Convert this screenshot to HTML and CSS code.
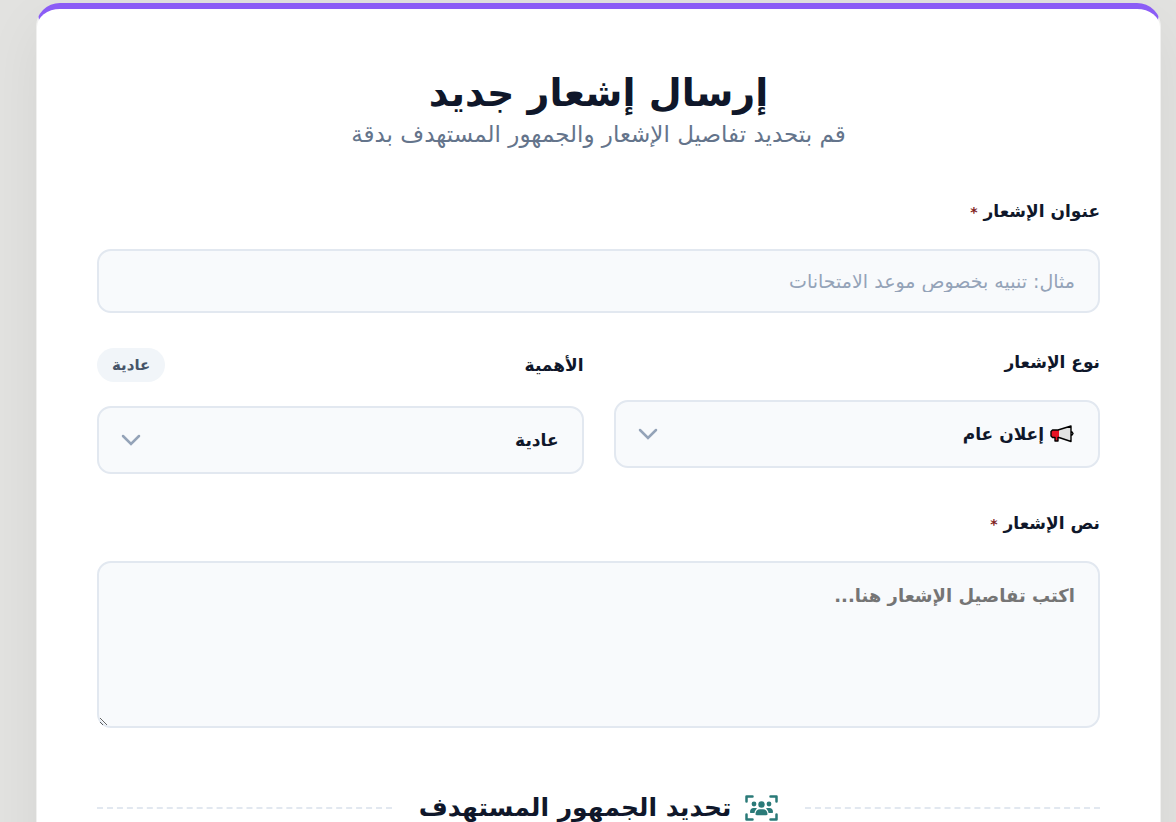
FILE: index.html
```html
<!DOCTYPE html>
<html lang="ar" dir="rtl">

<head>
  <meta charset="utf-8">
  <meta name="viewport" content="width=device-width, initial-scale=1">
  <title>إرسال إشعار جديد</title>
  <link rel="stylesheet" href="styles.css">
</head>

<body>
  <main class="card">
    <header class="card-header">
      <h1>إرسال إشعار جديد</h1>
      <p>قم بتحديد تفاصيل الإشعار والجمهور المستهدف بدقة</p>
    </header>

    <form class="notify-form">
      <div class="form-group">
        <div class="label-row">
          <label for="title">عنوان الإشعار <span class="required">*</span></label>
        </div>
        <input type="text" id="title" class="control" placeholder="مثال: تنبيه بخصوص موعد الامتحانات" required>
      </div>

      <div class="form-row">
        <div class="form-group">
          <div class="label-row">
            <label for="type">نوع الإشعار</label>
          </div>
          <div class="select-wrap">
            <select id="type" class="control has-icon">
              <option>إعلان عام</option>
            </select>
            <svg class="select-icon" viewBox="0 0 24 20" aria-hidden="true">
              <path d="M9 6 21 2v15.500L9 13.500z" fill="#e2e2e2"/>
              <path d="M2.500 6H9v7.500H8V17H5v-3.500H2.500L1 12V7.500z" fill="#e81224"/>
              <path d="M8 6 21 2v15.500L9 13.500M8 6H2.500L1 7.500V12l1.500 1.500H5V17h3v-3.500h1M21.500 7.500l1.500 2-1.500 2" fill="none" stroke="#000" stroke-width="1.400" stroke-linejoin="round"/>
            </svg>
            <svg class="chevron" viewBox="0 0 24 24" aria-hidden="true"><path d="M4 8l8 8 8-8"/></svg>
          </div>
        </div>

        <div class="form-group">
          <div class="label-row">
            <label for="priority">الأهمية</label>
            <span class="badge">عادية</span>
          </div>
          <div class="select-wrap">
            <select id="priority" class="control">
              <option>عادية</option>
            </select>
            <svg class="chevron" viewBox="0 0 24 24" aria-hidden="true"><path d="M4 8l8 8 8-8"/></svg>
          </div>
        </div>
      </div>

      <div class="form-group">
        <div class="label-row">
          <label for="message">نص الإشعار <span class="required">*</span></label>
        </div>
        <textarea id="message" class="control" placeholder="اكتب تفاصيل الإشعار هنا..." required></textarea>
      </div>

      <div class="divider">
        <h2>
          <svg class="users-icon" viewBox="0 0 33 26" aria-hidden="true">
            <path class="frame" d="M1.500 6.500v-5h6M25.500 1.500h6v5M31.500 19.500v5h-6M7.500 24.500h-6v-5"/>
            <circle cx="9" cy="9" r="2.400"/>
            <circle cx="24" cy="9" r="2.400"/>
            <circle cx="16.500" cy="9.500" r="3.200"/>
            <path d="M5 17c0-2.500 1.500-4 3.500-4h2c.8 0 1.200.2 1.700.6-1.500 1-2.500 2.600-2.700 4.400H6c-.6 0-1-.4-1-1zM28 17c0-2.500-1.500-4-3.500-4h-2c-.8 0-1.200.2-1.700.6 1.500 1 2.500 2.600 2.700 4.400H27c.6 0 1-.4 1-1z"/>
            <path d="M10.500 19c0-3 2-4.700 4.500-4.700h3c2.500 0 4.500 1.700 4.500 4.700 0 .8-.5 1.200-1.200 1.200h-9.600c-.7 0-1.200-.4-1.200-1.200z"/>
          </svg>
          تحديد الجمهور المستهدف
        </h2>
      </div>
    </form>
  </main>
</body>

</html>
```

FILE: styles.css
```css
* {
  box-sizing: border-box;
}

body {
  margin: 0;
  padding: 3px 15px 40px 36px;
  background: #e2e2e0;
  color: #0f172a;
  font-family: "DejaVu Sans", sans-serif;
}

.card {
  padding: 60px;
  background: #fff;
  border: 1px solid #f0f0ef;
  border-top: 6px solid #8b5cf6;
  border-radius: 24px;
  box-shadow: 0 20px 60px rgba(0, 0, 0, 0.06);
}

.card-header {
  margin-bottom: 45px;
  text-align: center;
}

h1 {
  margin: 0;
  font-size: 38px;
  line-height: 48px;
}

.card-header p {
  margin: 0;
  color: #64748b;
  font-size: 23px;
  line-height: 35px;
}

.notify-form {
  display: flex;
  flex-direction: column;
  gap: 35px;
}

.form-row {
  display: grid;
  grid-template-columns: 1fr 1fr;
  align-items: start;
  gap: 30px;
}

.label-row {
  display: flex;
  justify-content: space-between;
  align-items: center;
  margin-bottom: 24px;
}

label {
  font-size: 17px;
  font-weight: bold;
  line-height: 28px;
}

.required {
  color: #7f1d1d;
  font-size: 14px;
  line-height: 1;
}

.badge {
  padding: 0 15px;
  border-radius: 17px;
  background: #f1f5f9;
  color: #475569;
  font-size: 15px;
  font-weight: bold;
  line-height: 34px;
}

.control {
  display: block;
  width: 100%;
  height: 68px;
  padding: 0 23px;
  border: 2px solid #e2e8f0;
  border-radius: 14px;
  background: #f8fafc;
  color: #0f172a;
  font-family: inherit;
  font-size: 17px;
  font-weight: bold;
  outline: none;
}

input.control {
  height: 64px;
  font-size: 19px;
  font-weight: normal;
  line-height: 30px;
}

input.control::placeholder {
  color: #94a3b8;
  line-height: 30px;
}

textarea.control {
  height: 167px;
  padding: 18px 23px;
  font-size: 18px;
  line-height: 30px;
  resize: vertical;
}

textarea.control::placeholder {
  color: #757575;
}

.select-wrap {
  position: relative;
}

select.control {
  appearance: none;
}

select.has-icon {
  padding-right: 54px;
}

.select-icon {
  position: absolute;
  top: 24px;
  right: 26px;
  width: 24px;
  height: 20px;
  pointer-events: none;
}

.chevron {
  position: absolute;
  top: 22px;
  left: 22px;
  width: 24px;
  height: 24px;
  fill: none;
  stroke: #94a3b8;
  stroke-width: 2.5;
  stroke-linecap: round;
  pointer-events: none;
}

.divider {
  display: flex;
  align-items: center;
  gap: 27px;
  margin-top: 25px;
}

.divider::before,
.divider::after {
  content: "";
  flex: 1;
  border-top: 2px dashed #e2e8f0;
}

h2 {
  display: flex;
  align-items: center;
  gap: 14px;
  margin: 0;
  font-size: 25px;
  line-height: 40px;
}

.users-icon {
  width: 33px;
  height: 26px;
  fill: #2a7a78;
}

.users-icon .frame {
  fill: none;
  stroke: #2a7a78;
  stroke-width: 2.5;
  stroke-linecap: round;
  stroke-linejoin: round;
}
```
